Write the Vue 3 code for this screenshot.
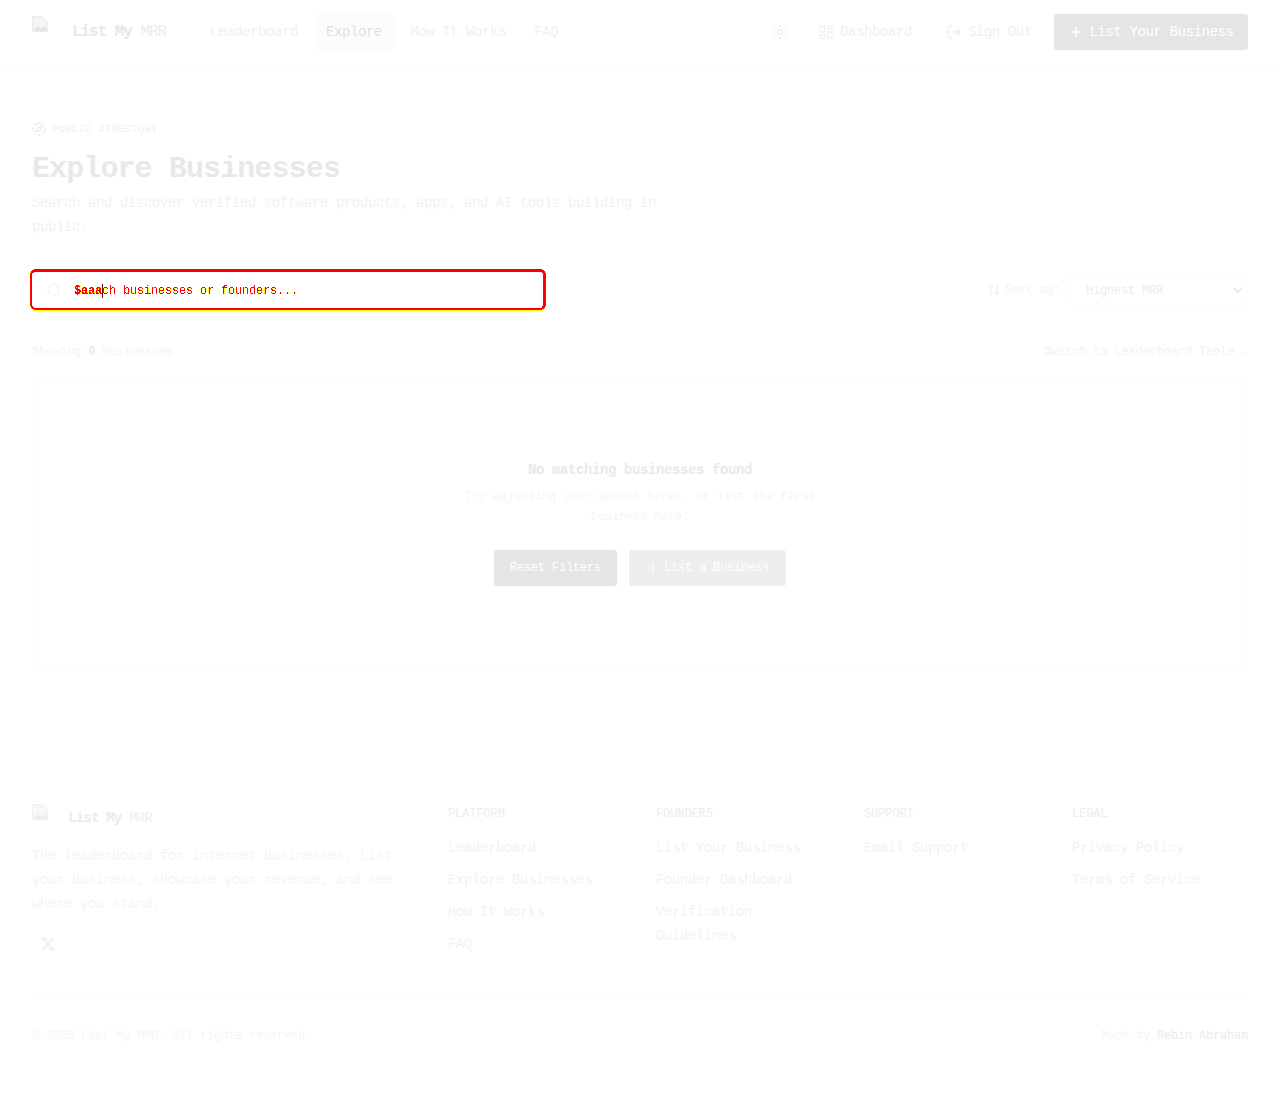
<template>
  <div class="page">
    <svg class="filter-defs" width="0" height="0" aria-hidden="true">
      <filter id="diffEdge" x="-5%" y="-20%" width="110%" height="140%" color-interpolation-filters="sRGB">
        <feComponentTransfer in="SourceAlpha" result="softMask">
          <feFuncA type="discrete" tableValues="0 1 1 1"></feFuncA>
        </feComponentTransfer>
        <feComponentTransfer in="SourceAlpha" result="hardMask">
          <feFuncA type="discrete" tableValues="0 0 1 1"></feFuncA>
        </feComponentTransfer>
        <feFlood flood-color="#ffff00" result="yellow"></feFlood>
        <feFlood flood-color="#ff0000" result="red"></feFlood>
        <feComposite in="yellow" in2="softMask" operator="in" result="yellowPart"></feComposite>
        <feComposite in="red" in2="hardMask" operator="in" result="redPart"></feComposite>
        <feMerge>
          <feMergeNode in="yellowPart"></feMergeNode>
          <feMergeNode in="redPart"></feMergeNode>
        </feMerge>
      </filter>
    </svg>

    <header class="topbar">
      <div class="topbar-left">
        <a class="brand">
          <span class="logo-box">
            <svg class="broken-img" width="16" height="16" viewBox="0 0 16 16">
              <path d="M0.5 0.5h10l5 5v10h-15z" fill="#f4f4f4" stroke="#ececec" />
              <path d="M1 15l5-5 3 3 3-3 3 3v2z" fill="#e4e4e4" />
            </svg>
          </span>
          <span class="brand-name">List My <span class="brand-muted">MRR</span></span>
        </a>
        <nav class="main-nav">
          <a v-for="item in navItems" :key="item" class="nav-link" :class="{ active: item === 'Explore' }">{{ item }}</a>
        </nav>
      </div>
      <div class="topbar-right">
        <button class="theme-btn" aria-label="Toggle theme">
          <svg width="16" height="16" viewBox="0 0 24 24" fill="none" stroke="currentColor" stroke-width="2" stroke-linecap="round">
            <circle cx="12" cy="12" r="4"></circle>
            <path d="M12 2v2M12 20v2M4.93 4.93l1.41 1.41M17.66 17.66l1.41 1.41M2 12h2M20 12h2M6.34 17.66l-1.41 1.41M19.07 4.93l-1.41 1.41"></path>
          </svg>
        </button>
        <a class="top-link">
          <svg width="16" height="16" viewBox="0 0 24 24" fill="none" stroke="currentColor" stroke-width="2" stroke-linejoin="round">
            <rect x="3" y="3" width="7" height="9" rx="1"></rect>
            <rect x="14" y="3" width="7" height="5" rx="1"></rect>
            <rect x="14" y="12" width="7" height="9" rx="1"></rect>
            <rect x="3" y="16" width="7" height="5" rx="1"></rect>
          </svg>
          Dashboard
        </a>
        <a class="top-link">
          <svg width="16" height="16" viewBox="0 0 24 24" fill="none" stroke="currentColor" stroke-width="2" stroke-linecap="round" stroke-linejoin="round">
            <path d="M9 21H5a2 2 0 0 1-2-2V5a2 2 0 0 1 2-2h4"></path>
            <path d="m16 17 5-5-5-5"></path>
            <path d="M21 12H9"></path>
          </svg>
          Sign Out
        </a>
        <button class="cta">
          <svg width="16" height="16" viewBox="0 0 24 24" fill="none" stroke="currentColor" stroke-width="2" stroke-linecap="round">
            <path d="M5 12h14M12 5v14"></path>
          </svg>
          List Your Business
        </button>
      </div>
    </header>

    <main class="content">
      <div class="eyebrow">
        <svg width="14" height="14" viewBox="0 0 24 24" fill="none" stroke="currentColor" stroke-width="2" stroke-linejoin="round">
          <circle cx="12" cy="12" r="10"></circle>
          <path d="m16.24 7.76-2.12 6.36-6.36 2.12 2.12-6.36z"></path>
        </svg>
        PUBLIC DIRECTORY
      </div>
      <h1 class="title">Explore Businesses</h1>
      <p class="subtitle">Search and discover verified software products, apps, and AI tools building in public.</p>

      <div class="filters">
        <div class="search-wrap">
          <span class="search-frame"></span>
          <svg class="search-icon" width="16" height="16" viewBox="0 0 24 24" fill="none" stroke="currentColor" stroke-width="2" stroke-linecap="round">
            <circle cx="11" cy="11" r="8"></circle>
            <path d="m21 21-4.35-4.35"></path>
          </svg>
          <div class="search-text">
            <span class="placeholder">Search businesses or founders...</span>
            <span class="ghost-value">$aaa</span>
            <span class="caret"></span>
          </div>
        </div>
        <div class="sort">
          <svg width="14" height="14" viewBox="0 0 24 24" fill="none" stroke="currentColor" stroke-width="2" stroke-linecap="round" stroke-linejoin="round">
            <path d="m21 16-4 4-4-4"></path>
            <path d="M17 20V4"></path>
            <path d="m3 8 4-4 4 4"></path>
            <path d="M7 4v16"></path>
          </svg>
          <span class="sort-label">Sort by:</span>
          <div class="sort-select">
            <span class="sort-value">Highest MRR</span>
            <svg width="12" height="12" viewBox="0 0 12 12" fill="none" stroke="currentColor" stroke-width="2">
              <path d="M2 4l4 4 4-4"></path>
            </svg>
          </div>
        </div>
      </div>

      <div class="result-row">
        <span class="result-count">Showing <b>0</b> businesses</span>
        <a class="switch-link">Switch to Leaderboard Table →</a>
      </div>

      <section class="empty-card">
        <h2 class="empty-title">No matching businesses found</h2>
        <p class="empty-text">Try adjusting your search terms, or list the first business here.</p>
        <div class="empty-actions">
          <button class="btn-reset">Reset Filters</button>
          <button class="btn-list">
            <svg width="14" height="14" viewBox="0 0 24 24" fill="none" stroke="currentColor" stroke-width="2" stroke-linecap="round">
              <path d="M5 12h14M12 5v14"></path>
            </svg>
            List a Business
          </button>
        </div>
      </section>
    </main>

    <footer class="footer">
      <div class="footer-grid">
        <div class="footer-about">
          <div class="footer-brand">
            <span class="footer-logo">
              <svg width="16" height="16" viewBox="0 0 16 16">
                <path d="M0.5 0.5h10l5 5v10h-15z" fill="#f7f7f7" stroke="#f0f0f0" />
                <path d="M1 15l5-5 3 3 3-3 3 3v2z" fill="#ececec" />
              </svg>
            </span>
            <span class="footer-name">List My <span class="footer-muted">MRR</span></span>
          </div>
          <p class="footer-desc">The leaderboard for internet businesses. List your business, showcase your revenue, and see where you stand.</p>
          <a class="social">
            <svg width="16" height="16" viewBox="0 0 24 24" fill="currentColor">
              <path d="M18.24 2.25h3.31l-7.23 8.26 8.5 11.24h-6.66l-5.21-6.82-5.97 6.82H1.68l7.73-8.84L1.25 2.25h6.83l4.71 6.23zm-1.16 17.52h1.83L7.08 4.13H5.12z"></path>
            </svg>
          </a>
        </div>
        <div v-for="col in footerCols" :key="col.title" class="footer-col">
          <h3 class="footer-heading">{{ col.title }}</h3>
          <a v-for="link in col.links" :key="link" class="footer-link">{{ link }}</a>
        </div>
      </div>
      <div class="footer-bottom">
        <span>© 2026 List My MRR. All rights reserved.</span>
        <span>Made by <b>Rebin Abraham</b></span>
      </div>
    </footer>
  </div>
</template>

<script setup>
const navItems = ['Leaderboard', 'Explore', 'How It Works', 'FAQ']

const footerCols = [
  { title: 'PLATFORM', links: ['Leaderboard', 'Explore Businesses', 'How It Works', 'FAQ'] },
  { title: 'FOUNDERS', links: ['List Your Business', 'Founder Dashboard', 'Verification Guidelines'] },
  { title: 'SUPPORT', links: ['Email Support'] },
  { title: 'LEGAL', links: ['Privacy Policy', 'Terms of Service'] }
]
</script>

<style>
html,
body {
  margin: 0;
  background: #fff;
}
</style>

<style scoped>
.page {
  height: 1093px;
  overflow: hidden;
  display: flex;
  flex-direction: column;
  font-family: "Liberation Mono", "DejaVu Sans Mono", monospace;
  font-size: 14px;
  letter-spacing: -0.4px;
  color: #f0f0f0;
  background: #fff;
}

button {
  font-family: inherit;
  letter-spacing: inherit;
  border: none;
}

svg {
  flex-shrink: 0;
}

.filter-defs {
  position: absolute;
}

.topbar {
  height: 65px;
  box-sizing: border-box;
  padding: 0 32px;
  display: flex;
  align-items: center;
  justify-content: space-between;
  border-bottom: 1px solid #fbfbfb;
}

.topbar-left {
  display: flex;
  align-items: center;
  gap: 32px;
}

.brand {
  display: flex;
  align-items: center;
  gap: 12px;
}

.logo-box {
  width: 28px;
  height: 32px;
  display: block;
}

.brand-name {
  font-size: 16px;
  font-weight: 700;
  letter-spacing: -1.05px;
  color: #e6e6e6;
}

.brand-muted {
  color: #ececec;
  font-weight: 400;
}

.main-nav {
  display: flex;
  gap: 4px;
}

.nav-link {
  padding: 0 12px;
  height: 36px;
  line-height: 36px;
  border-radius: 4px;
  color: #f1f1f1;
}

.nav-link.active {
  background: #fcfcfc;
  color: #e0e0e0;
}

.topbar-right {
  display: flex;
  align-items: center;
}

.theme-btn {
  width: 32px;
  height: 32px;
  background: none;
  padding: 0;
  display: flex;
  align-items: center;
  justify-content: center;
  color: #ededed;
  margin-right: 10px;
}

.top-link {
  display: flex;
  align-items: center;
  gap: 6px;
  padding: 0 12px;
  height: 36px;
  color: #f0f0f0;
}

.top-link + .top-link {
  margin-left: 10px;
}

.cta {
  height: 36px;
  width: 194px;
  margin-left: 10px;
  border-radius: 3px;
  background: #e5e5e5;
  color: #fff;
  font-size: 14px;
  display: flex;
  align-items: center;
  justify-content: center;
  gap: 5px;
}

.content {
  flex: 1;
  padding: 56px 32px 0;
}

.eyebrow {
  display: flex;
  align-items: center;
  gap: 6px;
  height: 16px;
  font-size: 11px;
  letter-spacing: 0;
  color: #f0f0f0;
}

.eyebrow svg {
  color: #ececec;
}

.title {
  margin: 14px 0 0;
  font-size: 30px;
  line-height: 36px;
  font-weight: 700;
  letter-spacing: -0.9px;
  color: #e8e8e8;
}

.subtitle {
  margin: 4px 0 0;
  width: 640px;
  line-height: 24px;
  color: #f2f2f2;
}

.filters {
  margin-top: 30px;
  display: flex;
  align-items: center;
  justify-content: space-between;
}

.search-wrap {
  position: relative;
  width: 516px;
  height: 41px;
  margin-left: -2px;
  border-radius: 6px;
  box-shadow: 0 1px 0 #ff0;
  display: flex;
  align-items: center;
}

.search-frame {
  position: absolute;
  inset: 0;
  box-sizing: border-box;
  border: solid #000;
  border-width: 3px 3px 2px 2px;
  border-radius: 6px;
  filter: url(#diffEdge);
}

.search-icon {
  position: absolute;
  left: 16px;
  top: 13px;
  color: #f4f4f4;
}

.search-text {
  position: relative;
  margin-left: 44px;
  margin-top: 2px;
  height: 16px;
  line-height: 16px;
  font-size: 12px;
  letter-spacing: -0.2px;
  white-space: nowrap;
}

.placeholder {
  display: inline-block;
  padding-right: 4px;
  color: #000;
  filter: url(#diffEdge);
}

.ghost-value {
  position: absolute;
  left: 0;
  top: 0;
  color: #000;
  font-weight: 700;
  filter: url(#diffEdge);
}

.caret {
  position: absolute;
  left: 28px;
  top: 1px;
  width: 1px;
  height: 14px;
  background: #600;
}

.sort {
  display: flex;
  align-items: center;
  color: #f0f0f0;
  font-size: 12px;
  letter-spacing: -0.2px;
}

.sort-label {
  margin-left: 4px;
  padding-top: 1px;
  color: #f3f3f3;
}

.sort-select {
  margin-left: 9px;
  width: 178px;
  height: 34px;
  box-sizing: border-box;
  padding: 0 3px 0 15px;
  border: 1px solid #fcfcfc;
  border-radius: 4px;
  display: flex;
  align-items: center;
  justify-content: space-between;
  color: #ececec;
}

.sort-value {
  padding-top: 3px;
}

.result-row {
  margin-top: 33px;
  display: flex;
  justify-content: space-between;
  line-height: 18px;
  font-size: 12px;
  letter-spacing: -0.17px;
  color: #f4f4f4;
}

.result-count b {
  color: #ebebeb;
}

.switch-link {
  color: #f2f2f2;
}

.empty-card {
  margin-top: 16px;
  height: 290px;
  box-sizing: border-box;
  border: 1px solid #fbfbfb;
  border-radius: 6px;
  padding-top: 82px;
  display: flex;
  flex-direction: column;
  align-items: center;
}

.empty-title {
  margin: 0;
  font-size: 14px;
  line-height: 20px;
  font-weight: 700;
  letter-spacing: -0.4px;
  color: #e9e9e9;
}

.empty-text {
  margin: 7px 0 0;
  width: 360px;
  text-align: center;
  font-size: 12px;
  line-height: 20px;
  letter-spacing: -0.2px;
  color: #f5f5f5;
}

.empty-actions {
  margin-top: 23px;
  display: flex;
  gap: 12px;
}

.btn-reset,
.btn-list {
  height: 36px;
  font-size: 12px;
  letter-spacing: -0.2px;
  color: #fff;
  border-radius: 3px;
  display: flex;
  align-items: center;
  justify-content: center;
  gap: 4px;
}

.btn-reset {
  width: 123px;
  background: #e5e5e5;
}

.btn-list {
  width: 157px;
  background: #eeeeee;
}

.footer {
  height: 289px;
  box-sizing: border-box;
  padding: 0 32px;
}

.footer-grid {
  display: grid;
  grid-template-columns: 400px 192px 192px 192px 1fr;
  column-gap: 16px;
  height: 188px;
}

.footer-brand {
  display: flex;
  align-items: center;
  gap: 8px;
  height: 28px;
}

.footer-logo {
  width: 28px;
  height: 28px;
  display: block;
}

.footer-name {
  font-size: 14px;
  font-weight: 700;
  color: #ebebeb;
  letter-spacing: -0.76px;
}

.footer-muted {
  color: #f0f0f0;
  font-weight: 400;
}

.footer-desc {
  margin: 12px 0 0;
  width: 368px;
  line-height: 24px;
  color: #f4f4f4;
}

.social {
  margin: 12px 0 0;
  display: flex;
  width: 32px;
  height: 32px;
  align-items: center;
  justify-content: center;
  color: #ededed;
}

.footer-col {
  display: flex;
  flex-direction: column;
  padding-right: 32px;
}

.footer-heading {
  margin: 2px 0 14px;
  font-size: 12px;
  line-height: 16px;
  font-weight: 400;
  letter-spacing: -0.1px;
  color: #ededed;
}

.footer-link {
  margin-bottom: 8px;
  line-height: 24px;
  color: #f2f2f2;
}

.footer-bottom {
  border-top: 1px solid #fafafa;
  padding-top: 34px;
  display: flex;
  justify-content: space-between;
  font-size: 12px;
  letter-spacing: -0.2px;
  line-height: 18px;
  color: #f5f5f5;
}

.footer-bottom b {
  color: #ebebeb;
  font-weight: 400;
}
</style>
